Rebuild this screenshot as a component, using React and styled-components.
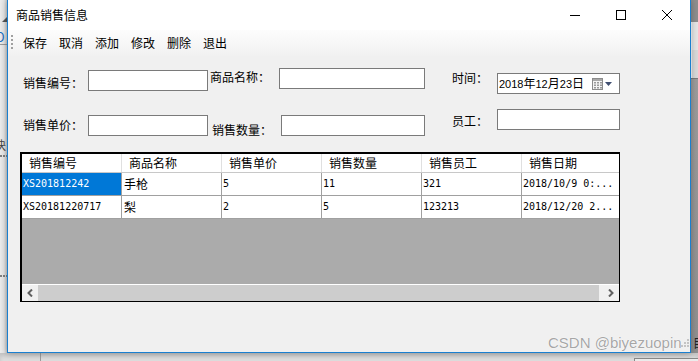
import React from "react";
import styled, { createGlobalStyle } from "styled-components";

const GlobalStyle = createGlobalStyle`
  *, *::before, *::after { box-sizing: border-box; }
  html, body { margin: 0; padding: 0; }
  body {
    width: 698px;
    height: 361px;
    overflow: hidden;
    background: #a3a3a3;
    font-family: "Noto Sans CJK SC", sans-serif;
    font-size: 12px;
    color: #000;
  }
`;

const Desktop = styled.div`
  position: relative;
  width: 698px;
  height: 361px;
  display: grid;
  grid-template-columns: 7px 684px 7px;
  grid-template-rows: 353px 8px;
  overflow: hidden;
`;

/* ---- bits of the desktop around the window ---- */

const LeftStrip = styled.div`
  grid-row: 1;
  grid-column: 1;
  display: flex;
  flex-direction: column;
  overflow: hidden;
  background: linear-gradient(to right, #ececec 0, #e6e6e6 4px, #c9c9c9 7px);
`;

const Caret = styled.div`
  margin: 17px 0 0 2px;
  width: 0;
  height: 0;
  border-left: 5px solid transparent;
  border-bottom: 5px solid #555;
`;

const Fragment = styled.span`
  display: block;
  margin-top: ${(p) => p.$mt}px;
  margin-left: ${(p) => p.$ml}px;
  height: ${(p) => p.$h || 14}px;
  line-height: ${(p) => p.$h || 14}px;
  color: ${(p) => p.$color || "#333"};
  font-size: ${(p) => p.$size || 12}px;
  white-space: nowrap;
`;

const Dots = styled.div`
  margin-top: ${(p) => p.$mt}px;
  width: 7px;
  height: 2px;
  background: repeating-linear-gradient(to right, #808080 0 2px, transparent 2px 3px);
`;

const HLine = styled.div`
  margin-top: ${(p) => p.$mt}px;
  height: 1px;
  background: #9a9a9a;
`;

const RightStrip = styled.div`
  grid-row: 1;
  grid-column: 3;
  display: flex;
  flex-direction: column;
  overflow: hidden;
  background: linear-gradient(#a0a0a0, #8f8f8f);
`;

const StripBlock = styled.div`
  height: ${(p) => p.$h}px;
  background: ${(p) => p.$bg};
  border-left: ${(p) => (p.$edge ? "1px solid #fafafa" : "none")};
`;

const BottomStrip = styled.div`
  grid-row: 2;
  grid-column: 1 / 4;
  display: flex;
  background: #dedede;
  box-shadow: inset 0 3px 4px rgba(0, 0, 0, 0.12);
`;

const BottomPane = styled.div`
  width: ${(p) => p.$w}px;
  flex: ${(p) => (p.$w ? "none" : "1")};
  border-right: ${(p) => (p.$line ? "1px solid #9c9c9c" : "none")};
  background: ${(p) => p.$bg || "transparent"};
`;

const BottomBox = styled.div`
  flex: 1;
  margin-top: 5px;
  border-top: 1px solid #8a8a8a;
  border-left: 1px solid #8a8a8a;
  background: #ececec;
`;

/* ---- the window ---- */

const Window = styled.div`
  grid-row: 1;
  grid-column: 2;
  z-index: 1;
  display: flex;
  flex-direction: column;
  background: #f0f0f0;
  border: 1px solid #1a7fcf;
  border-top: none;
  box-shadow: 0 0 7px rgba(0, 0, 0, 0.3);
`;

const TitleBar = styled.div`
  height: 30px;
  display: flex;
  align-items: center;
  background: #fff;
`;

const Title = styled.span`
  padding-left: 8px;
  font-size: 12px;
  line-height: 30px;
`;

const Controls = styled.div`
  margin-left: auto;
  display: flex;
`;

const ControlButton = styled.div`
  width: 46px;
  height: 30px;
  display: flex;
  align-items: center;
  justify-content: center;
`;

const Toolbar = styled.div`
  height: 26px;
  display: flex;
  align-items: center;
  padding-left: 3px;
  background: linear-gradient(#fdfdfd, #f1f1f1);
`;

const Grip = styled.div`
  width: 2px;
  height: 16px;
  margin-right: 4px;
  background: repeating-linear-gradient(#a0a0a0 0 2px, transparent 2px 4px);
`;

const ToolItem = styled.span`
  width: 36px;
  text-align: center;
  font-size: 12px;
  line-height: 18px;
`;

const Form = styled.div`
  padding-top: 12px;
  display: flex;
  flex-direction: column;
`;

const FieldRow = styled.div`
  height: ${(p) => p.$h}px;
  display: flex;
  align-items: flex-start;
`;

const Label = styled.span`
  width: ${(p) => p.$w}px;
  margin-left: ${(p) => p.$ml || 0}px;
  margin-top: ${(p) => p.$mt || 0}px;
  flex-shrink: 0;
  font-size: 12px;
  line-height: 18px;
  white-space: nowrap;
`;

const TextBox = styled.div`
  width: ${(p) => p.$w}px;
  height: 21px;
  margin-top: ${(p) => p.$mt || 0}px;
  flex-shrink: 0;
  background: #fff;
  border: 1px solid #7a7a7a;
`;

const DateBox = styled(TextBox)`
  display: flex;
  align-items: center;
  padding: 0 7px 0 1px;
  font-size: 12px;
  line-height: 19px;
`;

const DateText = styled.span`
  white-space: nowrap;
`;

const Num = styled.span`
  font-family: "Liberation Sans", Arial, sans-serif;
  font-size: 11px;
`;

const Picker = styled.div`
  margin-left: auto;
  display: flex;
  align-items: center;
  gap: 2px;
`;

/* ---- data grid ---- */

const GridBox = styled.div`
  margin-left: 12px;
  width: 600px;
  height: 150px;
  display: flex;
  flex-direction: column;
  border: 1px solid #000;
  border-left-width: 2px;
  border-top-width: 2px;
  overflow: hidden;
`;

const TableRow = styled.div`
  display: flex;
  height: ${(p) => (p.$head ? 19 : 23)}px;
  background: #fff;
  border-bottom: 1px solid ${(p) => (p.$head ? "#c8c8c8" : "#a0a0a0")};
`;

const HeadCell = styled.div`
  width: 100px;
  flex-shrink: 0;
  padding-left: 7px;
  border-right: 1px solid #e0e0e0;
  font-size: 12px;
  line-height: 18px;
  white-space: nowrap;
`;

const Cell = styled.div`
  width: 100px;
  flex-shrink: 0;
  padding-left: ${(p) => (p.$cjk ? 2 : 1)}px;
  border-right: 1px solid #a0a0a0;
  background: ${(p) => (p.$selected ? "#0078d7" : "#fff")};
  color: ${(p) => (p.$selected ? "#fff" : "#000")};
  font-family: ${(p) =>
    p.$cjk ? '"Noto Sans CJK SC", sans-serif' : '"DejaVu Sans Mono", monospace'};
  font-size: ${(p) => (p.$cjk ? 12 : 10)}px;
  line-height: 22px;
  white-space: nowrap;
  overflow: hidden;
`;

const GridBody = styled.div`
  flex: 1;
  background: #ababab;
`;

const HScroll = styled.div`
  height: 17px;
  display: flex;
  border-top: 1px solid #fff;
  background: #f0f0f0;
`;

const ScrollArrow = styled.div`
  width: 16px;
  display: flex;
  align-items: center;
  justify-content: center;
  margin-left: ${(p) => p.$ml || 0}px;
`;

const Thumb = styled.div`
  flex: 1;
  background: #cdcdcd;
`;

/* ---- overlays ---- */

const Watermark = styled.span`
  position: absolute;
  left: 548px;
  top: 334px;
  z-index: 2;
  font-family: "Liberation Sans", Arial, sans-serif;
  font-size: 15px;
  line-height: 17px;
  color: rgba(150, 150, 150, 0.85);
  text-shadow: 0 0 1px #fff, 0 0 1px #fff;
  white-space: nowrap;
`;

const ResizeGrip = styled.svg`
  position: absolute;
  left: 681px;
  top: 339px;
  z-index: 2;
`;

const columns = ["销售编号", "商品名称", "销售单价", "销售数量", "销售员工", "销售日期"];

const rows = [
  ["XS201812242", "手枪", "5", "11", "321", "2018/10/9 0:..."],
  ["XS20181220717", "梨", "2", "5", "123213", "2018/12/20 2..."],
];

const isCjk = (s) => /[\u4e00-\u9fff]/.test(s);

const CalendarIcon = () => (
  <svg width="11" height="12" viewBox="0 0 11 12">
    <rect x="0.5" y="0.5" width="10" height="11" fill="#f4f4f4" stroke="#8c8c8c" />
    <rect x="1" y="1" width="9" height="2" fill="#a8a8a8" />
    {[0, 1, 2].map((r) =>
      [0, 1, 2].map((c) => (
        <rect key={`${r}-${c}`} x={2 + c * 3} y={4 + r * 2.5} width="2" height="1.5" fill="#9a9a9a" />
      ))
    )}
  </svg>
);

const App = () => {
  return (
    <>
      <GlobalStyle />
      <Desktop>
        <LeftStrip>
          <Caret />
          <Fragment $mt={8} $ml={-5} $color="#1a6fc4" $size={13}>O</Fragment>
          <HLine $mt={0} />
          <Fragment $mt={93} $ml={-6} $color="#444">块</Fragment>
          <Dots $mt={3} />
          <Dots $mt={118} />
        </LeftStrip>

        <Window>
          <TitleBar>
            <Title>商品销售信息</Title>
            <Controls>
              <ControlButton>
                <svg width="10" height="10" viewBox="0 0 10 10">
                  <line x1="0" y1="5.5" x2="10" y2="5.5" stroke="#000" />
                </svg>
              </ControlButton>
              <ControlButton>
                <svg width="10" height="10" viewBox="0 0 10 10">
                  <rect x="0.5" y="0.5" width="9" height="9" fill="none" stroke="#000" />
                </svg>
              </ControlButton>
              <ControlButton>
                <svg width="10" height="10" viewBox="0 0 10 10">
                  <path d="M0 0 L10 10 M10 0 L0 10" stroke="#000" strokeWidth="1" />
                </svg>
              </ControlButton>
            </Controls>
          </TitleBar>

          <Toolbar>
            <Grip />
            {["保存", "取消", "添加", "修改", "删除", "退出"].map((t) => (
              <ToolItem key={t}>{t}</ToolItem>
            ))}
          </Toolbar>

          <Form>
            <FieldRow $h={41}>
              <Label $w={65} $ml={15} $mt={6}>销售编号：</Label>
              <TextBox $w={120} $mt={2} />
              <Label $w={69} $ml={2} $mt={0}>商品名称：</Label>
              <TextBox $w={146} $mt={0} />
              <Label $w={45} $ml={27} $mt={1}>时间：</Label>
              <DateBox $w={123} $mt={5}>
                <DateText>
                  <Num>2018</Num>年<Num>12</Num>月<Num>23</Num>日
                </DateText>
                <Picker>
                  <CalendarIcon />
                  <svg width="7" height="4" viewBox="0 0 7 4">
                    <path d="M0 0 H7 L3.5 4 Z" fill="#3f4e70" />
                  </svg>
                </Picker>
              </DateBox>
            </FieldRow>

            <FieldRow $h={43}>
              <Label $w={65} $ml={15} $mt={7}>销售单价：</Label>
              <TextBox $w={120} $mt={6} />
              <Label $w={69} $ml={4} $mt={12}>销售数量：</Label>
              <TextBox $w={144} $mt={6} />
              <Label $w={45} $ml={27} $mt={3}>员工：</Label>
              <TextBox $w={123} $mt={0} />
            </FieldRow>

            <GridBox>
              <TableRow $head>
                {columns.map((c) => (
                  <HeadCell key={c}>{c}</HeadCell>
                ))}
              </TableRow>
              {rows.map((r, i) => (
                <TableRow key={i}>
                  {r.map((v, j) => (
                    <Cell key={j} $cjk={isCjk(v)} $selected={i === 0 && j === 0}>
                      {v}
                    </Cell>
                  ))}
                </TableRow>
              ))}
              <GridBody />
              <HScroll>
                <ScrollArrow>
                  <svg width="6" height="8" viewBox="0 0 6 8">
                    <path d="M5 0.5 L1.5 4 L5 7.5" fill="none" stroke="#606060" strokeWidth="2" />
                  </svg>
                </ScrollArrow>
                <Thumb />
                <ScrollArrow $ml={4}>
                  <svg width="6" height="8" viewBox="0 0 6 8">
                    <path d="M1 0.5 L4.5 4 L1 7.5" fill="none" stroke="#606060" strokeWidth="2" />
                  </svg>
                </ScrollArrow>
              </HScroll>
            </GridBox>
          </Form>
        </Window>

        <RightStrip>
          <StripBlock $h={22} $bg="#8e8e8e" />
          <StripBlock $h={28} $bg="#e6e6e6" $edge />
          <StripBlock $h={28} $bg="#dadada" $edge />
          <StripBlock $h={1} $bg="#7a7a7a" />
          <Fragment $mt={257} $ml={2} $color="#222">目</Fragment>
        </RightStrip>

        <BottomStrip>
          <BottomPane $w={41} $line />
          <BottomPane $w={593} />
          <BottomBox />
        </BottomStrip>

        <Watermark>CSDN @biyezuopin</Watermark>
        <ResizeGrip width="8" height="8" viewBox="0 0 8 8">
          {[
            [6, 0],
            [6, 3],
            [3, 3],
            [6, 6],
            [3, 6],
            [0, 6],
          ].map(([x, y]) => (
            <rect key={`${x}-${y}`} x={x} y={y} width="2" height="2" fill="#c4c4c4" />
          ))}
        </ResizeGrip>
      </Desktop>
    </>
  );
};

export default App;
